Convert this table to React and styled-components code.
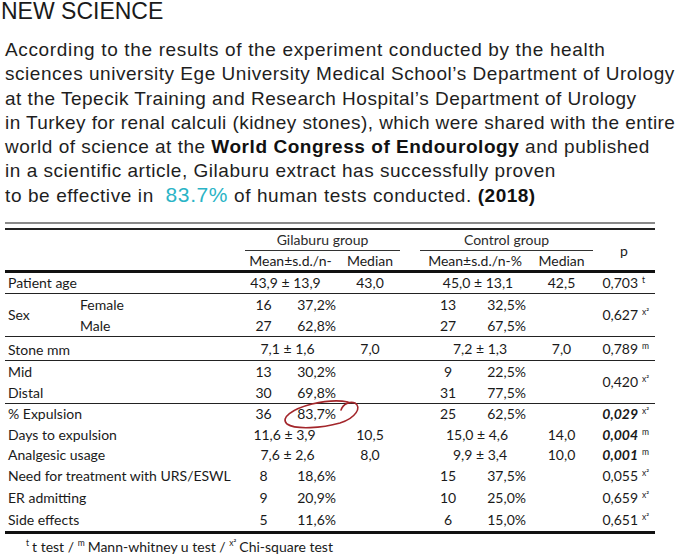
import React from "react";
import styled, { createGlobalStyle } from "styled-components";

const GlobalStyle = createGlobalStyle`
  body {
    margin: 0;
    background: #fff;
  }
`;

const Page = styled.div`
  position: relative;
  width: 679px;
  height: 557px;
  overflow: hidden;
  background: #fff;
  color: #1e1e1e;
  font-family: "Liberation Sans", Arial, sans-serif;
`;

const Title = styled.h1`
  margin: 0 0 0 1px;
  font-size: 23px;
  font-weight: 400;
  line-height: 23px;
  color: #1a1a1a;
`;

const Intro = styled.p`
  margin: 15px 0 0 5px;
  font-size: 19px;
  line-height: 24.3px;
  white-space: nowrap;
  color: #1e1e1e;
`;

// the source face is a little wider than Arial, and not evenly so: each line gets its own tracking
const Line = styled.span`
  display: block;
  letter-spacing: ${(p) => p.$ls}px;
`;

const Strong = styled.b`
  font-weight: 700;
  letter-spacing: ${(p) => p.$ls ?? 0.5}px;
  color: #111;
`;

const Accent = styled.span`
  font-size: 21px;
  line-height: 0;
  color: #2ab4c6;
`;

const TableWrap = styled.div`
  margin: 14px 0 0 5px;
  width: 650px;
  border-top: 2px solid #8a8a8a;
  padding-top: 4px;
`;

const Table = styled.table`
  width: 650px;
  table-layout: fixed;
  border-collapse: separate;
  border-spacing: 0;
  border-top: 2px solid #222;
  font-family: Lato, "Open Sans", sans-serif;
  font-size: 14px;
  color: #1a1a1a;
`;

const Row = styled.tr`
  height: ${(p) => p.$h}px;
`;

const rules = {
  thin: "1px solid #222",
  thick: "3px solid #111",
};

const Cell = styled.td`
  padding: 0;
  padding-top: ${(p) => p.$pt || 0}px;
  padding-left: ${(p) => p.$pl || 0}px;
  padding-right: ${(p) => p.$pr || 0}px;
  line-height: 16px;
  white-space: nowrap;
  text-align: ${(p) => p.$align || "left"};
  border-bottom: ${(p) => (p.$rule ? rules[p.$rule] : "none")};
  font-weight: ${(p) => (p.$bold ? 700 : 400)};
  font-style: ${(p) => (p.$italic ? "italic" : "normal")};
`;

const GroupHead = styled(Cell)`
  text-align: center;
  color: #2a2a2a;
  border-bottom: 1px solid #333;
`;

const Sup = styled.span`
  display: inline-block;
  width: 17px;
  padding-left: 4px;
  box-sizing: border-box;
  font-size: 8.5px;
  font-weight: 400;
  font-style: normal;
  vertical-align: top;
  position: relative;
  top: -3px;
  text-align: left;
`;

const Footnote = styled.div`
  padding: 4px 0 0 21px;
  font-family: Lato, "Open Sans", sans-serif;
  font-size: 14px;
  color: #1a1a1a;
  white-space: nowrap;
`;

const FootSup = styled.sup`
  font-size: 8.5px;
  margin-right: 3px;
`;

const Circle = styled.svg`
  position: absolute;
  left: 0;
  top: 0;
  pointer-events: none;
`;

const widths = [70, 170, 37, 58, 60, 20, 56, 54, 63, 62];

const PValue = ({ value, sup, bold, rule, rowSpan }) => (
  <Cell
    rowSpan={rowSpan}
    $align="right"
    $bold={bold}
    $italic={bold}
    $rule={rule}
  >
    {value}
    <Sup>{sup}</Sup>
  </Cell>
);

const CountCells = ({ n, pct, rule }) => (
  <>
    <Cell $align="center" $rule={rule}>{n}</Cell>
    <Cell $align="right" $pr={4} $rule={rule}>{pct}</Cell>
  </>
);

const MeanCell = ({ value, rule, pr, pl }) => (
  <Cell colSpan={2} $align="center" $pr={pr} $pl={pl} $rule={rule}>
    {value}
  </Cell>
);

const Blank = ({ rule }) => <Cell $rule={rule} />;

const CHI = "x²";

const App = () => {
  return (
    <Page>
      <GlobalStyle />
      <Title>NEW SCIENCE</Title>
      <Intro>
        <Line $ls={0.65}>
          According to the results of the experiment conducted by the health
        </Line>
        <Line $ls={0.53}>
          sciences university Ege University Medical School’s Department of Urology
        </Line>
        <Line $ls={0.5}>
          at the Tepecik Training and Research Hospital’s Department of Urology
        </Line>
        <Line $ls={0.43}>
          in Turkey for renal calculi (kidney stones), which were shared with the entire
        </Line>
        <Line $ls={0.5}>
          world of science at the <Strong $ls={0.55}>World Congress of Endourology</Strong>{" "}
          and published
        </Line>
        <Line $ls={0.53}>
          in a scientific article, Gilaburu extract has successfully proven
        </Line>
        <Line $ls={0.6}>
          to be effective in&nbsp; <Accent>83.7%</Accent> of human tests conducted.{" "}
          <Strong>(2018)</Strong>
        </Line>
      </Intro>

      <TableWrap>
        <Table>
          <colgroup>
            {widths.map((w, i) => (
              <col key={i} style={{ width: w }} />
            ))}
          </colgroup>
          <thead>
            <Row $h={21}>
              <Cell colSpan={2} rowSpan={2} $rule="thick" />
              <GroupHead colSpan={3}>Gilaburu group</GroupHead>
              <Cell />
              <GroupHead colSpan={3}>Control group</GroupHead>
              <Cell rowSpan={2} $align="center" $rule="thick" $pt={2}>
                p
              </Cell>
            </Row>
            <Row $h={22}>
              <Cell colSpan={2} $align="center" $pr={4} $rule="thick">
                Mean±s.d./n-
              </Cell>
              <Cell $align="center" $rule="thick">Median</Cell>
              <Cell $rule="thick" />
              <Cell colSpan={2} $align="center" $rule="thick">
                Mean±s.d./n-%
              </Cell>
              <Cell $align="center" $rule="thick">Median</Cell>
            </Row>
          </thead>
          <tbody>
            <Row $h={21}>
              <Cell colSpan={2} $pl={3} $rule="thin">Patient age</Cell>
              <MeanCell value="43,9 ± 13,9" pr={14} rule="thin" />
              <Cell $align="center" $rule="thin">43,0</Cell>
              <Blank rule="thin" />
              <MeanCell value="45,0 ± 13,1" pl={6} rule="thin" />
              <Cell $align="center" $rule="thin">42,5</Cell>
              <PValue value="0,703" sup="t" rule="thin" />
            </Row>

            <Row $h={21}>
              <Cell rowSpan={2} $pl={3} $rule="thin">Sex</Cell>
              <Cell $pl={5}>Female</Cell>
              <CountCells n="16" pct="37,2%" />
              <Blank />
              <Blank />
              <CountCells n="13" pct="32,5%" />
              <Blank />
              <PValue value="0,627" sup={CHI} rowSpan={2} rule="thin" />
            </Row>
            <Row $h={22}>
              <Cell $pl={5} $rule="thin">Male</Cell>
              <CountCells n="27" pct="62,8%" rule="thin" />
              <Blank rule="thin" />
              <Blank rule="thin" />
              <CountCells n="27" pct="67,5%" rule="thin" />
              <Blank rule="thin" />
            </Row>

            <Row $h={24}>
              <Cell colSpan={2} $pl={3} $pt={3} $rule="thin">Stone mm</Cell>
              <MeanCell value="7,1 ± 1,6" pr={10} rule="thin" />
              <Cell $align="center" $rule="thin">7,0</Cell>
              <Blank rule="thin" />
              <MeanCell value="7,2 ± 1,3" pl={10} rule="thin" />
              <Cell $align="center" $rule="thin">7,0</Cell>
              <PValue value="0,789" sup="m" rule="thin" />
            </Row>

            <Row $h={21}>
              <Cell colSpan={2} $pl={3}>Mid</Cell>
              <CountCells n="13" pct="30,2%" />
              <Blank />
              <Blank />
              <CountCells n="9" pct="22,5%" />
              <Blank />
              <PValue value="0,420" sup={CHI} rowSpan={2} rule="thin" />
            </Row>
            <Row $h={22}>
              <Cell colSpan={2} $pl={3} $rule="thin">Distal</Cell>
              <CountCells n="30" pct="69,8%" rule="thin" />
              <Blank rule="thin" />
              <Blank rule="thin" />
              <CountCells n="31" pct="77,5%" rule="thin" />
              <Blank rule="thin" />
            </Row>

            <Row $h={20}>
              <Cell colSpan={2} $pl={3}>% Expulsion</Cell>
              <CountCells n="36" pct="83,7%" />
              <Blank />
              <Blank />
              <CountCells n="25" pct="62,5%" />
              <Blank />
              <PValue value="0,029" sup={CHI} bold />
            </Row>
            <Row $h={21}>
              <Cell colSpan={2} $pl={3}>Days to expulsion</Cell>
              <MeanCell value="11,6 ± 3,9" pr={16} />
              <Cell $align="center">10,5</Cell>
              <Blank />
              <MeanCell value="15,0 ± 4,6" pl={4} />
              <Cell $align="center">14,0</Cell>
              <PValue value="0,004" sup="m" bold />
            </Row>
            <Row $h={20}>
              <Cell colSpan={2} $pl={3}>Analgesic usage</Cell>
              <MeanCell value="7,6 ± 2,6" pr={10} />
              <Cell $align="center">8,0</Cell>
              <Blank />
              <MeanCell value="9,9 ± 3,4" pl={10} />
              <Cell $align="center">10,0</Cell>
              <PValue value="0,001" sup="m" bold />
            </Row>
            <Row $h={22}>
              <Cell colSpan={2} $pl={3}>Need for treatment with URS/ESWL</Cell>
              <CountCells n="8" pct="18,6%" />
              <Blank />
              <Blank />
              <CountCells n="15" pct="37,5%" />
              <Blank />
              <PValue value="0,055" sup={CHI} />
            </Row>
            <Row $h={22}>
              <Cell colSpan={2} $pl={3}>ER admitting</Cell>
              <CountCells n="9" pct="20,9%" />
              <Blank />
              <Blank />
              <CountCells n="10" pct="25,0%" />
              <Blank />
              <PValue value="0,659" sup={CHI} />
            </Row>
            <Row $h={25}>
              <Cell colSpan={2} $pl={3} $rule="thick">Side effects</Cell>
              <CountCells n="5" pct="11,6%" rule="thick" />
              <Blank rule="thick" />
              <Blank rule="thick" />
              <CountCells n="6" pct="15,0%" rule="thick" />
              <Blank rule="thick" />
              <PValue value="0,651" sup={CHI} rule="thick" />
            </Row>
          </tbody>
        </Table>
        <Footnote>
          <FootSup>t</FootSup>t test / <FootSup>m</FootSup>Mann-whitney u test /{" "}
          <FootSup>{CHI}</FootSup>Chi-square test
        </Footnote>
      </TableWrap>

      <Circle width="679" height="557" viewBox="0 0 679 557">
        <path
          d="M341 410 C343 404, 350 401, 355 403 C362 407, 356 418, 340 423 C322 428, 296 430, 287 424 C280 418, 292 409, 312 404 C325 401, 338 400, 348 402"
          fill="none"
          stroke="#a3262b"
          strokeWidth="1.6"
          strokeLinecap="round"
        />
      </Circle>
    </Page>
  );
};

export default App;
